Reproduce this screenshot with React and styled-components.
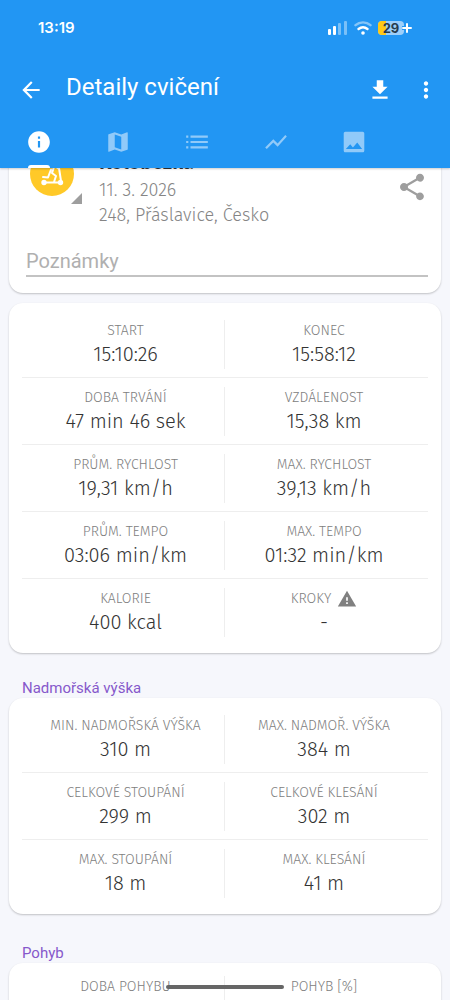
import React from "react"
import styled, { createGlobalStyle } from "styled-components"

const GlobalStyle = createGlobalStyle`
  * {
    box-sizing: border-box;
  }
  body {
    margin: 0;
    background: #f6f7fc;
    font-family: Roboto, "Liberation Sans", sans-serif;
  }
`

const Page = styled.div`
  display: flex;
  flex-direction: column;
  height: 100vh;
  overflow: hidden;
`

const Header = styled.header`
  position: relative;
  z-index: 1;
  flex-shrink: 0;
  background: #2296f3;
  color: white;
  box-shadow: 0 1px 2px rgba(0, 0, 0, 0.2);
`

const StatusBar = styled.div`
  display: flex;
  align-items: center;
  justify-content: space-between;
  height: 56px;
  padding: 0 38px;
  font: 600 15px/24px Inter, sans-serif;
`

const StatusIcons = styled.div`
  display: flex;
  align-items: center;
  gap: 6px;
`

const Toolbar = styled.div`
  display: flex;
  align-items: center;
  height: 62px;
  padding: 0 11px 0 18px;
`

const Title = styled.h1`
  flex-grow: 1;
  margin: 0 0 0 22px;
  font-size: 24px;
  line-height: 32px;
  font-weight: 400;
`

const IconButton = styled.button`
  display: flex;
  align-items: center;
  justify-content: center;
  padding: 5px 0 0;
  border: 0;
  background: none;
  color: ${props => props.color || "white"};
  cursor: pointer;
`

const ToolbarButtons = styled.div`
  display: flex;
  gap: 20px;
`

const Tabs = styled.nav`
  display: flex;
  height: 50px;
`

const Tab = styled.button`
  display: flex;
  flex-direction: column;
  align-items: center;
  justify-content: space-between;
  width: 17.5%;
  padding: 11px 0 0;
  border: 0;
  background: none;
  color: white;
  cursor: pointer;

  > svg {
    opacity: ${props => (props.$active ? 1 : 0.5)};
  }
  &::after {
    content: "";
    width: 22px;
    height: 3px;
    border-radius: 3px 3px 0 0;
    background: ${props => (props.$active ? "white" : "transparent")};
  }
`

const Content = styled.main`
  padding: 0 9px;
`

const Card = styled.section`
  padding: ${props => (props.$dense ? 4 : 8)}px 13px 8px;
  border-radius: 14px;
  background: white;
  box-shadow: 0 1px 2px rgba(0, 0, 0, 0.22);
`

const SummaryCard = styled(Card)`
  margin: -26px 0 10px;
  padding: 0 13px 16px 17px;
`

const Summary = styled.div`
  display: flex;
  align-items: flex-start;
`

const Activity = styled.button`
  display: flex;
  align-items: flex-end;
  width: 73px;
  padding: 10px 0 0 4px;
  border: 0;
  background: none;
`

const SummaryText = styled.div`
  flex-grow: 1;
  color: #858585;
  font: 300 18px/25px "Fira Sans", "Open Sans", sans-serif;

  h2 {
    margin: 0;
    padding-top: 5px;
    color: #333;
    font-size: 20px;
    line-height: 31px;
    font-weight: 600;
  }
  p {
    margin: 0;
  }
`

const Share = styled(IconButton)`
  margin-top: 24px;
`

const Notes = styled.input`
  display: block;
  width: 100%;
  height: 34px;
  margin-top: 15px;
  padding: 3px 0 0;
  border: 0;
  border-bottom: 2px solid #c3c3c3;
  background: none;
  font: 400 20px/28px Roboto, sans-serif;
  color: #333;

  &::placeholder {
    color: #b0b0b0;
    opacity: 1;
  }
`

const SectionTitle = styled.h2`
  margin: 0;
  padding: ${props => props.$top}px 13px 0;
  color: #8659cb;
  font-size: 15px;
  line-height: 20px;
  font-weight: 400;
`

const Row = styled.div`
  display: grid;
  grid-template-columns: 1fr 1fr;
  padding: 9px 5px 8px;

  & + & {
    border-top: 1px solid #eee;
  }
`

const Stat = styled.dl`
  margin: 0;
  padding: 3px 0;
  text-align: center;
  font-family: "Fira Sans", "Open Sans", sans-serif;
  font-weight: 300;

  &:first-child {
    border-right: 1px solid #eee;
  }
  dt {
    display: flex;
    align-items: center;
    justify-content: center;
    gap: 6px;
    height: 16px;
    color: #808080;
    font-size: 14px;
    line-height: 16px;
  }
  dd {
    margin: 3px 0 0;
    color: #333;
    font-size: 20px;
    line-height: 24px;
  }
`

const HomeBar = styled.div`
  position: fixed;
  bottom: 11px;
  left: 50%;
  width: 118px;
  height: 4px;
  border-radius: 2px;
  background: #666;
  transform: translateX(-50%);
`

const Icon = ({ d, size = 24 }) => (
  <svg width={size} height={size} viewBox="0 0 24 24" fill="currentColor" aria-hidden="true">
    <path d={d} />
  </svg>
)

const paths = {
  back: "M20 11H7.83l5.59-5.59L12 4l-8 8 8 8 1.41-1.41L7.83 13H20v-2z",
  download: "M19 9h-4V3H9v6H5l7 7 7-7zM5 18v2h14v-2H5z",
  more:
    "M12 8c1.1 0 2-.9 2-2s-.9-2-2-2-2 .9-2 2 .9 2 2 2zm0 2c-1.1 0-2 .9-2 2s.9 2 2 2 2-.9 2-2-.9-2-2-2zm0 6c-1.1 0-2 .9-2 2s.9 2 2 2 2-.9 2-2-.9-2-2-2z",
  share:
    "M18 16.08c-.76 0-1.44.3-1.96.77L8.91 12.7c.05-.23.09-.46.09-.7s-.04-.47-.09-.7l7.05-4.11c.54.5 1.25.81 2.04.81 1.66 0 3-1.34 3-3s-1.34-3-3-3-3 1.34-3 3c0 .24.04.47.09.7L8.04 9.81C7.5 9.31 6.79 9 6 9c-1.66 0-3 1.34-3 3s1.34 3 3 3c.79 0 1.5-.31 2.04-.81l7.12 4.16c-.05.21-.08.43-.08.65 0 1.61 1.31 2.92 2.92 2.92 1.61 0 2.92-1.31 2.92-2.92s-1.31-2.92-2.92-2.92z",
  warning: "M1 21h22L12 2 1 21zm12-3h-2v-2h2v2zm0-4h-2v-4h2v4z",
}

const tabs = [
  {
    label: "Informace",
    d: "M12 2C6.48 2 2 6.48 2 12s4.48 10 10 10 10-4.48 10-10S17.52 2 12 2zm1 15h-2v-6h2v6zm0-8h-2V7h2v2z",
  },
  {
    label: "Mapa",
    d:
      "M20.5 3l-.16.03L15 5.1 9 3 3.36 4.9c-.21.07-.36.25-.36.48V20.5c0 .28.22.5.5.5l.16-.03L9 18.9l6 2.1 5.64-1.9c.21-.07.36-.25.36-.48V3.5c0-.28-.22-.5-.5-.5zM15 19l-6-2.11V5l6 2.11V19z",
  },
  {
    label: "Seznam",
    d: "M2 6h2v2H2zM2 11h2v2H2zM2 16h2v2H2zM6 6h16v2H6zM6 11h16v2H6zM6 16h16v2H6z",
  },
  { label: "Graf", d: "M3.5 18.49l6-6.01 4 4L22 6.92l-1.41-1.41-7.09 7.97-4-4L2 16.99z" },
  {
    label: "Fotky",
    d:
      "M21.500 20V4c0-.8-.7-1.500-1.500-1.500H4c-.8 0-1.500.7-1.500 1.500v16c0 .8.7 1.500 1.500 1.500h16c.8 0 1.500-.7 1.500-1.500zM8.500 14l2.500 3 4-4.500 4.500 6h-15l4-4.500z",
  },
]

const mainStats = [
  [["START", "15:10:26"], ["KONEC", "15:58:12"]],
  [["DOBA TRVÁNÍ", "47 min 46 sek"], ["VZDÁLENOST", "15,38 km"]],
  [["PRŮM. RYCHLOST", "19,31 km/h"], ["MAX. RYCHLOST", "39,13 km/h"]],
  [["PRŮM. TEMPO", "03:06 min/km"], ["MAX. TEMPO", "01:32 min/km"]],
  [["KALORIE", "400 kcal"], ["KROKY", "-", true]],
]

const altitudeStats = [
  [["MIN. NADMOŘSKÁ VÝŠKA", "310 m"], ["MAX. NADMOŘ. VÝŠKA", "384 m"]],
  [["CELKOVÉ STOUPÁNÍ", "299 m"], ["CELKOVÉ KLESÁNÍ", "302 m"]],
  [["MAX. STOUPÁNÍ", "18 m"], ["MAX. KLESÁNÍ", "41 m"]],
]

const movementStats = [[["DOBA POHYBU", ""], ["POHYB [%]", ""]]]

const Stats = ({ rows, dense }) => (
  <Card $dense={dense}>
    {rows.map(row => (
      <Row key={row[0][0]}>
        {row.map(([label, value, warning]) => (
          <Stat key={label}>
            <dt>
              {label}
              {warning && <Icon d={paths.warning} size={20} />}
            </dt>
            <dd>{value}</dd>
          </Stat>
        ))}
      </Row>
    ))}
  </Card>
)

const Signal = () => (
  <svg width="20" height="14" viewBox="0 0 20 14" fill="white" aria-hidden="true">
    <rect x="0" y="8" width="3" height="6" rx="1" />
    <rect x="5" y="5" width="3" height="9" rx="1" />
    <rect x="10" y="2" width="3" height="12" rx="1" opacity=".4" />
    <rect x="16" y="0" width="3" height="14" rx="1" opacity=".4" />
  </svg>
)

const Wifi = () => (
  <svg width="18" height="14" viewBox="0 0 18 14" fill="none" stroke="white" strokeWidth="2.4" strokeLinecap="round" aria-hidden="true">
    <path d="M1.500 4.200C5.800.4 12.200.4 16.500 4.200" opacity=".45" />
    <path d="M4.500 8c2.700-2.200 6.300-2.200 9 0" />
    <circle cx="9" cy="12" r="1.800" fill="white" stroke="none" />
  </svg>
)

const Battery = () => (
  <svg width="34" height="14" viewBox="0 0 34 14" aria-label="29 %">
    <rect width="26" height="14" rx="4" fill="#9dcffa" />
    <path d="M4 0h4v14H4a4 4 0 0 1-4-4V4a4 4 0 0 1 4-4z" fill="#ffc917" />
    <text x="13" y="12" textAnchor="middle" fontFamily="Inter" fontWeight="700" fontSize="13" fill="#263b4d">29</text>
    <path d="M29 2v10M24 7h9" stroke="#2296f3" strokeWidth="4" />
    <path d="M29 3v8M25 7h8" stroke="white" strokeWidth="2" strokeLinecap="round" />
  </svg>
)

const Scooter = () => (
  <svg width="52" height="53" viewBox="0 0 52 53" aria-hidden="true">
    <circle cx="22" cy="22" r="22" fill="#ffc928" />
    <g fill="none" stroke="white" strokeWidth="2" strokeLinecap="round" strokeLinejoin="round">
      <path d="M15 30.500h15M31 29l-2-13M13 25l5 .500 3-8M24 15l-2 6 4 3-2 6M22 12l7 5" />
      <circle cx="14" cy="30.500" r="1.700" fill="white" />
      <circle cx="30.500" cy="30.500" r="1.700" fill="white" />
    </g>
    <path d="M52 41v11H41z" fill="#9e9e9e" />
  </svg>
)

const App = () => (
  <>
    <GlobalStyle />
    <Page>
      <Header>
        <StatusBar>
          <span>13:19</span>
          <StatusIcons>
            <Signal />
            <Wifi />
            <Battery />
          </StatusIcons>
        </StatusBar>
        <Toolbar>
          <IconButton aria-label="Zpět">
            <Icon d={paths.back} size={26} />
          </IconButton>
          <Title>Detaily cvičení</Title>
          <ToolbarButtons>
            <IconButton aria-label="Stáhnout">
              <Icon d={paths.download} size={26} />
            </IconButton>
            <IconButton aria-label="Více">
              <Icon d={paths.more} size={26} />
            </IconButton>
          </ToolbarButtons>
        </Toolbar>
        <Tabs>
          {tabs.map((tab, i) => (
            <Tab key={tab.label} aria-label={tab.label} $active={i === 0}>
              <Icon d={tab.d} size={26} />
            </Tab>
          ))}
        </Tabs>
      </Header>
      <Content>
        <SummaryCard>
          <Summary>
            <Activity aria-label="Koloběžka">
              <Scooter />
            </Activity>
            <SummaryText>
              <h2>Koloběžka</h2>
              <p>11. 3. 2026</p>
              <p>248, Přáslavice, Česko</p>
            </SummaryText>
            <Share aria-label="Sdílet" color="#9e9e9e">
              <Icon d={paths.share} size={32} />
            </Share>
          </Summary>
          <Notes aria-label="Poznámky" placeholder="Poznámky" />
        </SummaryCard>
        <Stats rows={mainStats} />
        <SectionTitle $top={25}>Nadmořská výška</SectionTitle>
        <Stats rows={altitudeStats} />
        <SectionTitle $top={29}>Pohyb</SectionTitle>
        <Stats rows={movementStats} dense />
      </Content>
      <HomeBar />
    </Page>
  </>
)

export default App
